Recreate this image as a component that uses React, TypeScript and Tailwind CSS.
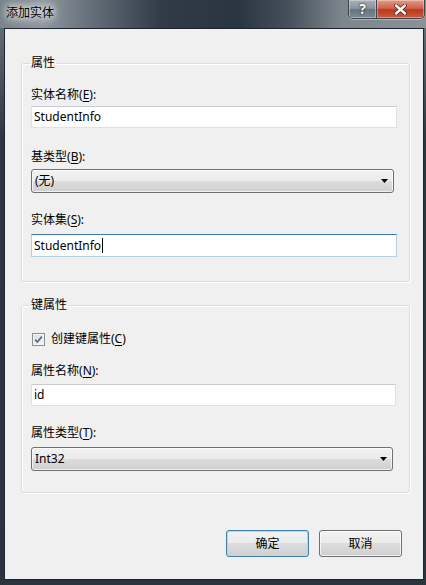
const Label = ({ zh, k, colon = true }: { zh: string; k: string; colon?: boolean }) => (
  <div className="h-[16px] leading-[16px]">
    {zh}(<span className="underline underline-offset-2">{k}</span>){colon ? ":" : ""}
  </div>
);

const TextBox = ({ value, focused = false, caret = false, w = "w-[366px]" }: { value: string; focused?: boolean; caret?: boolean; w?: string }) => (
  <div
    className={`${w} h-[22px] bg-white border flex items-center pl-[2px] leading-[16px] ${
      focused ? "border-[#b5cfe7] border-t-[#3d7bad] h-[23px]" : "border-[#dde2e8] border-t-[#c9ccd2]"
    }`}
  >
    <span>{value}</span>
    {caret && <span className="inline-block w-px h-[15px] bg-black ml-px" />}
  </div>
);

const Combo = ({ value, w = "w-[363px]" }: { value: string; w?: string }) => (
  <div className={`${w} h-[24px] rounded-[3px] border border-[#707070] bg-[linear-gradient(to_bottom,#f2f2f2_0%,#ebebeb_50%,#dddddd_50%,#cfcfcf_100%)] shadow-[inset_0_0_0_1px_rgba(255,255,255,0.7)] flex items-center pl-[3px] pr-[5px] leading-[16px]`}>
    <span>{value}</span>
    <svg className="ml-auto" width="7" height="4" viewBox="0 0 7 4">
      <path d="M0 0h7L3.5 4z" fill="#000" />
    </svg>
  </div>
);

const Button = ({ text, primary = false }: { text: string; primary?: boolean }) => (
  <div
    className={`w-[83px] h-[27px] rounded-[3px] border flex items-center justify-center bg-[linear-gradient(to_bottom,#f2f2f2_0%,#ebebeb_50%,#dddddd_50%,#cfcfcf_100%)] ${
      primary ? "border-[#3c7fb1] shadow-[inset_0_0_0_1px_#9fe2fb]" : "border-[#707070] shadow-[inset_0_0_0_1px_rgba(255,255,255,0.7)]"
    }`}
  >
    {text}
  </div>
);

export default function App() {
  return (
    <div className="w-[426px] h-[585px] overflow-hidden text-[12px] text-black font-['Noto_Sans','Noto_Sans_CJK_SC',sans-serif] bg-[linear-gradient(to_bottom,#6f7981_0px,#2c3640_140px,#2b343e_585px)]">
      {/* title bar */}
      <div className="h-[28px] flex items-start bg-[linear-gradient(to_right,#78828b_0%,#8f979e_10%,#5b6671_24%,#303b47_38%,#2a3542_56%,#46515c_68%,#7d858c_80%,#8b9298_100%)]">
        <div className="pl-[6px] pt-[5px] leading-[16px] [text-shadow:0_0_6px_#fff,0_0_10px_rgba(255,255,255,0.9),0_0_14px_rgba(255,255,255,0.7)]">
          添加实体
        </div>
        <div className="ml-auto mr-px flex h-[19px] rounded-b-[5px] border border-t-0 border-[#3a424b] overflow-hidden shadow-[0_1px_0_rgba(255,255,255,0.35)]">
          <div className="w-[28px] h-full flex items-center justify-center bg-[linear-gradient(to_bottom,#a7afb6_0%,#8c959d_45%,#69737d_55%,#7f8991_100%)] border-r border-[#3a424b] shadow-[inset_0_0_0_1px_rgba(255,255,255,0.35)]">
            <span className="text-white font-bold text-[14px] leading-none [text-shadow:0_0_2px_#222,0_0_1px_#000]">?</span>
          </div>
          <div className="w-[47px] h-full flex items-center justify-center bg-[linear-gradient(to_bottom,#e39b88_0%,#d0644a_45%,#b53a21_55%,#d25a3b_100%)] shadow-[inset_0_0_0_1px_rgba(255,255,255,0.35)]">
            <svg width="13" height="11" viewBox="0 0 13 11">
              <path d="M2 1.5l9 8M11 1.5l-9 8" stroke="#5a2216" strokeWidth="4" strokeLinecap="round" />
              <path d="M2 1.5l9 8M11 1.5l-9 8" stroke="#fff" strokeWidth="2.4" strokeLinecap="round" />
            </svg>
          </div>
        </div>
      </div>

      {/* client area */}
      <div className="ml-[4px] w-[420px] h-[552px] border border-[#1e2731] bg-[#f0f0f0] flex flex-col pt-[26px] pl-[16px]">
        <fieldset className="w-[389px] border border-[#d5dfe5] rounded-[3px] px-[9px] pb-[24px] shadow-[inset_1px_1px_0_#fff,1px_1px_0_#fff]">
          <legend className="px-px -ml-px leading-[16px]">属性</legend>
          <div className="mt-[16px]">
            <Label zh="实体名称" k="E" />
          </div>
          <div className="mt-[3px]">
            <TextBox value="StudentInfo" />
          </div>
          <div className="mt-[21px]">
            <Label zh="基类型" k="B" />
          </div>
          <div className="mt-[4px]">
            <Combo value="(无)" />
          </div>
          <div className="mt-[19px]">
            <Label zh="实体集" k="S" />
          </div>
          <div className="mt-[6px]">
            <TextBox value="StudentInfo" focused caret />
          </div>
        </fieldset>

        <fieldset className="mt-[15px] w-[389px] border border-[#d5dfe5] rounded-[3px] px-[9px] pb-[21px] shadow-[inset_1px_1px_0_#fff,1px_1px_0_#fff]">
          <legend className="px-px -ml-px leading-[16px]">键属性</legend>
          <div className="mt-[18px] h-[16px] flex items-center">
            <div className="ml-px w-[13px] h-[13px] border border-[#8e8f8f] bg-[linear-gradient(135deg,#dcdcdc,#f7f7f7)] shadow-[inset_0_0_0_1px_#f4f4f4] flex items-center justify-center">
              <svg width="9" height="9" viewBox="0 0 9 9">
                <path d="M1.2 4.6l2.2 2.4L7.8 1.6" fill="none" stroke="#56689a" strokeWidth="1.7" />
              </svg>
            </div>
            <div className="ml-[6px] leading-[16px]">
              创建键属性(<span className="underline underline-offset-2">C</span>)
            </div>
          </div>
          <div className="mt-[16px]">
            <Label zh="属性名称" k="N" />
          </div>
          <div className="mt-[5px]">
            <TextBox value="id" w="w-[365px]" />
          </div>
          <div className="mt-[19px]">
            <Label zh="属性类型" k="T" />
          </div>
          <div className="mt-[6px]">
            <Combo value="Int32" w="w-[362px]" />
          </div>
        </fieldset>

        <div className="mt-[37px] w-[402px] flex justify-end gap-[10px] pr-[21px]">
          <Button text="确定" primary />
          <Button text="取消" />
        </div>
      </div>
    </div>
  );
}
